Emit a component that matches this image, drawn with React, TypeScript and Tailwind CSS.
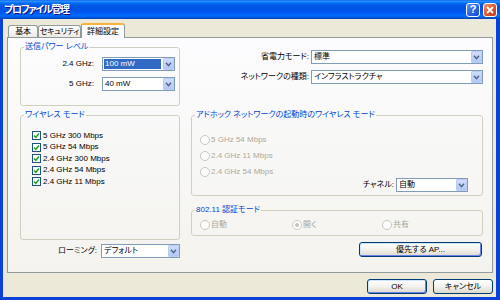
import React from "react";

const font =
  "font-['Liberation_Sans','Noto_Sans_CJK_JP',sans-serif] [font-feature-settings:'palt']";

function Chevron() {
  return (
    <svg width="7" height="5" viewBox="0 0 7 5">
      <path d="M1 0.8 L3.5 3.6 L6 0.8" stroke="#4D6185" strokeWidth="1.4" fill="none" />
    </svg>
  );
}

function Combo({
  value,
  className,
  selected,
}: {
  value: string;
  className: string;
  selected?: boolean;
}) {
  return (
    <div className={`h-[14px] border border-[#7F9DB9] bg-white flex items-stretch ${className}`}>
      <div className="flex-1 flex items-stretch p-[1px] pr-[2px]">
        <span
          className={`flex items-center pl-[1px] leading-none whitespace-nowrap ${
            selected ? "bg-[#316AC5] text-white w-full" : "text-black"
          }`}
        >
          {value}
        </span>
      </div>
      <div className="w-[11px] rounded-[1px] border border-[#BACBF5] bg-gradient-to-b from-[#CFDDFC] to-[#B3C7F5] flex items-center justify-center">
        <Chevron />
      </div>
    </div>
  );
}

function Check() {
  return (
    <div className="w-[9px] h-[9px] border border-[#1C5180] bg-white flex items-center justify-center shrink-0">
      <svg width="7" height="7" viewBox="0 0 7 7">
        <path d="M1 3.4 L2.8 5.3 L6 1.4" stroke="#21A121" strokeWidth="1.5" fill="none" />
      </svg>
    </div>
  );
}

function Radio({ checked }: { checked?: boolean }) {
  return (
    <div className="w-[10px] h-[10px] rounded-full border border-[#CAC8BB] bg-white flex items-center justify-center shrink-0">
      {checked && <div className="w-[4px] h-[4px] rounded-full bg-[#C4C2B5]" />}
    </div>
  );
}

function Group({
  title,
  className,
  children,
}: {
  title: string;
  className: string;
  children?: React.ReactNode;
}) {
  return (
    <fieldset className={`border border-[#D0D0BF] rounded-[3px] ${className}`}>
      <legend className="ml-[3px] px-[1px] text-[#0046D5] leading-[10px] whitespace-nowrap">{title}</legend>
      {children}
    </fieldset>
  );
}

function Button({ label, className, isDefault }: { label: string; className: string; isDefault?: boolean }) {
  return (
    <div
      className={`h-[15px] border border-[#003C74] rounded-[3px] bg-gradient-to-b from-white via-[#F3F2EE] to-[#DCD8CC] flex items-center justify-center text-black leading-none whitespace-nowrap ${
        isDefault ? "shadow-[inset_1px_1px_0_#CEE7FF,inset_-1px_-1px_0_#6982EE]" : ""
      } ${className}`}
    >
      {label}
    </div>
  );
}

function TitleBar() {
  return (
    <div className="h-[19px] shrink-0 flex items-center pl-[4px] pr-[3px] bg-[linear-gradient(180deg,#0058EE_0%,#3593FF_5%,#288EFF_8%,#127DFF_12%,#036FFC_16%,#0262EE_22%,#0057E5_30%,#0054E3_40%,#0055EB_60%,#005BF5_70%,#026AFE_80%,#0062EF_88%,#0052D6_94%,#0040AB_100%)]">
      <span className="flex-1 text-white font-bold text-[10px] tracking-[-1.3px] leading-none [text-shadow:1px_1px_#0F1089]">
        プロファイル管理
      </span>
      <div className="flex gap-[3px]">
        <div className="w-[14px] h-[14px] rounded-[3px] border border-white bg-gradient-to-br from-[#5B8FF5] via-[#2C66E6] to-[#1A4BCB] flex items-center justify-center text-white font-bold text-[11px] leading-none">
          ?
        </div>
        <div className="w-[14px] h-[14px] rounded-[3px] border border-white bg-gradient-to-br from-[#F0936E] via-[#E0582F] to-[#C23A18] flex items-center justify-center">
          <svg width="8" height="8" viewBox="0 0 8 8">
            <path d="M1 1 L7 7 M7 1 L1 7" stroke="white" strokeWidth="1.8" />
          </svg>
        </div>
      </div>
    </div>
  );
}

function Tabs() {
  const unsel =
    "h-[12px] mb-[1px] border border-b-0 border-[#919B9C] rounded-t-[3px] bg-gradient-to-b from-white to-[#ECEBE6] flex items-center justify-center leading-none whitespace-nowrap tracking-[-0.3px]";
  return (
    <div className="h-[15px] flex items-end pl-[5px] shrink-0">
      <div className={`${unsel} w-[30px]`}>基本</div>
      <div className={`${unsel} w-[43px]`}>セキュリティ</div>
      <div className="relative h-[15px] w-[44px] border-x border-[#919B9C] border-t-[2px] border-t-[#F7B33A] rounded-t-[3px] bg-[#FCFCFE] flex items-center justify-center leading-none whitespace-nowrap">
        詳細設定
      </div>
    </div>
  );
}

function Panel() {
  return (
    <div className="-mt-[1px] ml-[4px] mr-[3px] h-[236px] shrink-0 border border-[#919B9C] bg-gradient-to-b from-[#FCFCFE] to-[#F4F3EE] flex pl-[12px] pt-[4px] gap-[11px]">
      {/* left column */}
      <div className="w-[160px] flex flex-col">
        <Group title="送信パワー レベル" className="h-[64px]">
          <div className="flex flex-col gap-[6px] pt-[5px] pr-[4px]">
            <div className="flex items-center justify-end gap-[8px]">
              <span>2.4 GHz:</span>
              <Combo value="100 mW" selected className="w-[73px]" />
            </div>
            <div className="flex items-center justify-end gap-[8px]">
              <span>5 GHz:</span>
              <Combo value="40 mW" className="w-[73px]" />
            </div>
          </div>
        </Group>
        <Group title="ワイヤレス モード" className="h-[130px] mt-[4px]">
          <div className="flex flex-col pt-[10px] pl-[11px]">
            {["5 GHz 300 Mbps", "5 GHz 54 Mbps", "2.4 GHz 300 Mbps", "2.4 GHz 54 Mbps", "2.4 GHz 11 Mbps"].map(
              (t) => (
                <div key={t} className="h-[11.5px] flex items-center gap-[2px]">
                  <Check />
                  <span className="leading-none">{t}</span>
                </div>
              )
            )}
          </div>
        </Group>
        <div className="mt-[4px] flex items-center justify-end gap-[4px]">
          <span>ローミング:</span>
          <Combo value="デフォルト" className="w-[79px]" />
        </div>
      </div>

      {/* right column */}
      <div className="w-[292px] flex flex-col">
        <div className="mt-[8px] flex items-center justify-end gap-[2px]">
          <span>省電力モード:</span>
          <Combo value="標準" className="w-[172px]" />
        </div>
        <div className="mt-[6px] flex items-center justify-end gap-[2px]">
          <span>ネットワークの種類:</span>
          <Combo value="インフラストラクチャ" className="w-[172px]" />
        </div>
        <Group title="アドホック ネットワークの起動時のワイヤレス モード" className="h-[86px] mt-[26px]">
          <div className="flex flex-col pt-[12px] pl-[8px] text-[#ACA899]">
            {["5 GHz 54 Mbps", "2.4 GHz 11 Mbps", "2.4 GHz 54 Mbps"].map((t) => (
              <div key={t} className="h-[16px] flex items-center gap-[1px]">
                <Radio />
                <span className="leading-none">{t}</span>
              </div>
            ))}
          </div>
          <div className="-mt-[2px] flex items-center justify-end gap-[2px] pr-[14px]">
            <span>チャネル:</span>
            <Combo value="自動" className="w-[72px] h-[13px]" />
          </div>
        </Group>
        <Group title="802.11 認証モード" className="h-[31px] mt-[9px]">
          <div className="flex items-center pt-[5px] pl-[8px] text-[#ACA899] h-[15px]">
            <div className="w-[92px] flex items-center gap-[1px]">
              <Radio />
              <span className="leading-none">自動</span>
            </div>
            <div className="w-[90px] flex items-center gap-[1px]">
              <Radio checked />
              <span className="leading-none">開く</span>
            </div>
            <div className="flex items-center gap-[1px]">
              <Radio />
              <span className="leading-none">共有</span>
            </div>
          </div>
        </Group>
        <Button label="優先する AP..." isDefault className="w-[123px] self-end mr-[1px] mt-[6px]" />
      </div>
    </div>
  );
}

export default function App() {
  return (
    <div className={`w-[500px] h-[300px] bg-[#0842D8] flex flex-col ${font} text-[8px] text-black`}>
      <TitleBar />
      <div className="flex-1 ml-[3px] mr-[4px] mb-[3px] bg-[#ECE9D8] flex flex-col pt-[4px]">
        <Tabs />
        <Panel />
        <div className="flex justify-end gap-[6px] mr-[3px] mt-[6px]">
          <Button label="OK" isDefault className="w-[60px]" />
          <Button label="キャンセル" className="w-[60px]" />
        </div>
      </div>
    </div>
  );
}
